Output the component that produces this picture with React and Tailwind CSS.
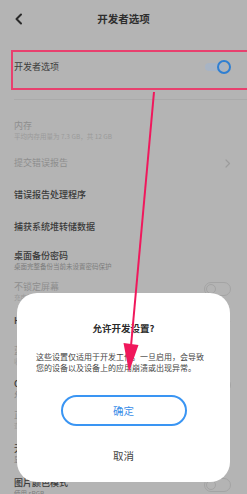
import React from 'react';

const font = { fontFamily: '"Noto Sans CJK SC", "Noto Sans", sans-serif' };

const Chevron = ({ className = '' }) => (
  <svg className={className} width="6" height="9" viewBox="0 0 6 9" fill="none">
    <path d="M1 1l3.5 3.5L1 8" stroke="currentColor" strokeWidth="1.2" strokeLinecap="round" strokeLinejoin="round" />
  </svg>
);

const OffToggle = () => (
  <div className="relative w-[27px] h-[14px] rounded-full border border-[#a4a4a4]">
    <div className="absolute left-[1px] top-[1px] w-[10px] h-[10px] rounded-full border border-[#a4a4a4]" />
  </div>
);

const Row = ({ title, sub, dim, mt, right }) => (
  <div className={`flex items-start justify-between pl-[14px] pr-[16px] ${mt}`}>
    <div>
      <div className={`text-[9px] leading-[12px] ${dim ? 'text-[#8e8e8e]' : 'text-[#3a3a3a] font-medium'}`}>{title}</div>
      {sub && <div className={`text-[6.5px] leading-[9px] ${dim ? 'text-[#9a9a9a]' : 'text-[#7c7c7c]'}`}>{sub}</div>}
    </div>
    {right}
  </div>
);

export default function App() {
  return (
    <div className="relative w-[247px] h-[494px] overflow-hidden bg-[#b4b4b4]" style={font}>
      {/* header */}
      <div className="grid grid-cols-[40px_1fr_40px] items-center h-[38px]">
        <svg className="ml-[14px] text-[#2a2a2a]" width="9" height="12" viewBox="0 0 9 12" fill="none">
          <path d="M7 1.5L2.5 6L7 10.5" stroke="currentColor" strokeWidth="2" strokeLinecap="round" strokeLinejoin="round" />
        </svg>
        <div className="text-center text-[10.5px] font-bold text-[#2e2e2e]">开发者选项</div>
        <div />
      </div>

      {/* highlighted row */}
      <div className="mt-[12px] ml-[11px] h-[40px] border-2 border-r-0 border-[#e8406e] flex items-center justify-between pl-[1px] pr-[16px] pb-[6px]">
        <div className="text-[9px] leading-[12px] text-[#3c3c3c]">开发者选项</div>
        <div className="relative w-[26px] h-[14px]">
          <div className="absolute left-0 top-[3px] w-[20px] h-[8px] rounded-full bg-[#a8b4c4]" />
          <div className="absolute right-0 top-0 w-[14px] h-[14px] rounded-full border-2 border-[#2f7fd2]" />
        </div>
      </div>

      <div className="mt-[9px] ml-[14px] h-px bg-[#aaaaaa]" />

      <Row title="内存" sub="平均内存用量为 7.3 GB，共 12 GB" dim mt="mt-[20px]" />
      <Row title="提交错误报告" dim mt="mt-[16px]" right={<Chevron className="mt-[2px] text-[#9c9c9c]" />} />
      <Row title="错误报告处理程序" mt="mt-[20px]" />
      <Row title="捕获系统堆转储数据" mt="mt-[20px]" />
      <Row title="桌面备份密码" sub="桌面完整备份当前未设置密码保护" mt="mt-[17px]" />
      <Row title="不锁定屏幕" sub="充电时屏幕不会休眠" dim mt="mt-[10px]" right={<div className="mt-[1px]"><OffToggle /></div>} />
      <Row title="HDCP 检查" mt="mt-[13px]" right={<Chevron className="mt-[2px] text-[#555]" />} />
      <Row title="蓝牙日志" sub="收集蓝牙数据包" dim mt="mt-[18px]" />
      <Row title="OEM 解锁" sub="允许解锁引导加载程序" mt="mt-[12px]" right={<OffToggle />} />
      <Row title="正在运行的服务" sub="查看和控制当前正在运行的服务" dim mt="mt-[10px]" />
      <Row title="无线显示认证" sub="显示无线显示认证选项" mt="mt-[13px]" />
      <Row title="图片颜色模式" sub="使用 sRGB" mt="mt-[13px]" right={<div className="mt-[1px]"><OffToggle /></div>} />

      {/* dialog */}
      <div className="absolute left-[17px] top-[293px] w-[213px] h-[189px] bg-white rounded-[20px] flex flex-col">
        <div className="pt-[28px] text-center text-[9.5px] leading-[14px] font-bold text-[#2a2a2a]">允许开发设置?</div>
        <div className="mt-[16px] px-[19px] text-[8px] leading-[11px] text-[#444] whitespace-nowrap">
          <div>这些设置仅适用于开发工作。一旦启用，会导致</div>
          <div>您的设备以及设备上的应用崩溃或出现异常。</div>
        </div>
        <div className="mt-[22px] mx-auto w-[126px] h-[31px] rounded-full border-2 border-[#3a95f3] flex items-center justify-center text-[10.5px] text-[#3a8ee8]">确定</div>
        <div className="mt-[23px] text-center text-[10.5px] leading-[14px] text-[#444]">取消</div>
      </div>

      {/* annotation arrow */}
      <svg className="absolute left-0 top-0 pointer-events-none" width="247" height="494" viewBox="0 0 247 494">
        <line x1="154" y1="92" x2="131" y2="346" stroke="#f0185c" strokeWidth="2" />
        <polygon points="123.5,343 138.5,345 129,372" fill="#f0185c" />
      </svg>
    </div>
  );
}
